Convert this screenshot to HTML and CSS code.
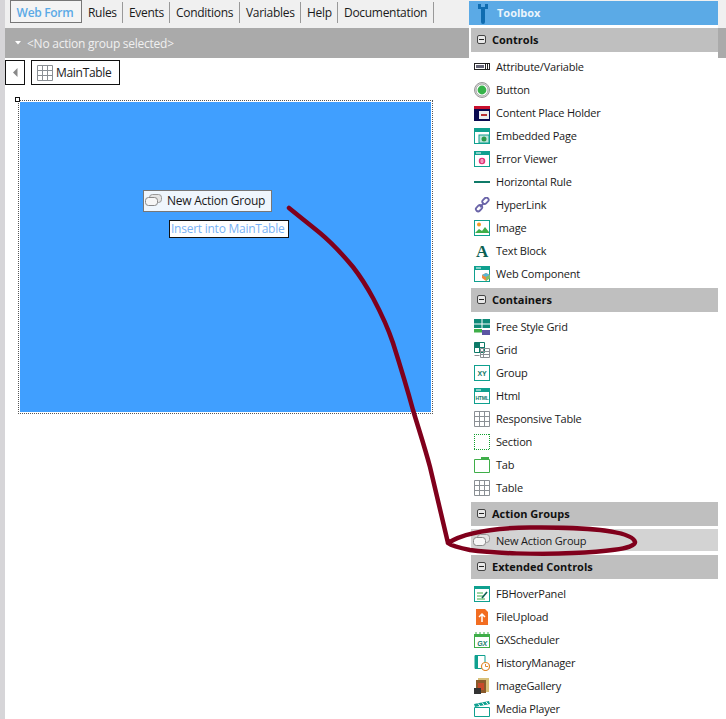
FILE: index.html
```html
<!DOCTYPE html>
<html lang="en">
<head>
<meta charset="utf-8">
<title>Web Form</title>
<link rel="stylesheet" href="styles.css">
</head>
<body>
<div class="app">
  <main class="editor">
    <nav class="tabs">
      <span class="tab active">Web Form</span>
      <span class="tab t-rules">Rules</span>
      <span class="tab t-events">Events</span>
      <span class="tab t-cond">Conditions</span>
      <span class="tab t-vars">Variables</span>
      <span class="tab t-help">Help</span>
      <span class="tab t-doc">Documentation</span>
    </nav>
    <div class="groupbar"><svg class="caret" width="6" height="4" viewBox="0 0 6 4"><path d="M0 0h6L3 3.5z" fill="#fff"/></svg><span>&lt;No action group selected&gt;</span></div>
    <div class="crumbs">
      <button class="back"><svg width="5" height="9" viewBox="0 0 5 9"><path d="M4.5 0v9L0 4.5z" fill="#888"/></svg></button>
      <button class="crumb"><svg width="16" height="16" viewBox="0 0 16 16"><path d="M.5.5h15v15H.5zM5.5.5v15M10.5.5v15M.5 5.5h15M.5 10.5h15" fill="none" stroke="#8a8f94"/></svg><span>MainTable</span></button>
    </div>
    <div class="canvas-wrap">
      <div class="canvas"></div>
      <i class="handle"></i>
      <div class="drag"><svg width="17" height="12" viewBox="0 0 17 12"><rect x="4.5" y=".5" width="12" height="8" rx="3" fill="#e4e4e4" stroke="#999"/><rect x=".5" y="3.5" width="12" height="8" rx="3" fill="#f6f6f6" stroke="#888"/></svg><span>New Action Group</span></div>
      <div class="hint">Insert into MainTable</div>
    </div>
  </main>

  <aside class="toolbox">
    <header class="tb-title"><svg width="10" height="21" viewBox="0 0 10 21"><path d="M0 1h3v3h4V1h3v5H7v13a2 2 0 0 1-4 0V6H0z" fill="#0f6cb0"/></svg><span>Toolbox</span></header>

    <h2 class="sec"><i class="minus"></i>Controls</h2>
    <ul class="list">
      <li><svg viewBox="0 0 16 16"><rect x=".5" y="4.5" width="15" height="6" fill="#fff" stroke="#222"/><rect x="2" y="6" width="8" height="3" fill="#667"/><path d="M11.5 5v5M13.5 5v5" stroke="#222"/></svg>Attribute/Variable</li>
      <li><svg viewBox="0 0 16 16"><circle cx="8" cy="8" r="7.5" fill="#ddd" stroke="#999"/><circle cx="8" cy="8" r="6" fill="#fff" stroke="#aaa"/><circle cx="8" cy="8" r="4.4" fill="#36b34a"/></svg>Button</li>
      <li><svg viewBox="0 0 16 16"><rect width="16" height="15" y="1" fill="#0a0a50"/><rect x="0" y="1" width="16" height="3" fill="#c8102e"/><rect x="5" y="6" width="10" height="8" fill="#eee"/><rect x="7" y="9" width="6" height="2" fill="#b33"/></svg>Content Place Holder</li>
      <li><svg viewBox="0 0 16 16"><rect x=".5" y=".5" width="15" height="15" fill="#fff" stroke="#0fa08f"/><rect width="16" height="4" fill="#0fa08f"/><rect x="5" y="7" width="10" height="8" fill="#bde5dc" stroke="#0fa08f"/><circle cx="10" cy="11" r="2.5" fill="#2a9a4a"/></svg>Embedded Page</li>
      <li><svg viewBox="0 0 16 16"><rect x=".5" y=".5" width="15" height="15" fill="#fff" stroke="#0fa08f"/><rect width="16" height="4" fill="#0fa08f"/><path d="M2 2h5" stroke="#fff"/><circle cx="8" cy="10" r="2.5" fill="none" stroke="#e2337a" stroke-width="1.5"/><path d="M5.5 10h5" stroke="#e2337a"/></svg>Error Viewer</li>
      <li><svg viewBox="0 0 16 16"><rect y="7" width="16" height="2" fill="#0f7a68"/></svg>Horizontal Rule</li>
      <li><svg viewBox="0 0 16 16"><g fill="none" stroke="#6a64a8" stroke-width="1.8"><rect x="8" y="1.5" width="7" height="4.5" rx="2.2" transform="rotate(-45 11.5 3.8)"/><rect x="1.5" y="9" width="7" height="4.5" rx="2.2" transform="rotate(-45 5 11.2)"/><path d="M6 10l4-4"/></g></svg>HyperLink</li>
      <li><svg viewBox="0 0 16 16"><rect x=".5" y=".5" width="15" height="15" fill="#fff" stroke="#0fa08f"/><circle cx="5" cy="4.5" r="2" fill="#f59a23"/><path d="M1 13l4-4 3 2 3-4 4 5v1H1z" fill="#3fae49"/></svg>Image</li>
      <li><svg class="ico-over" viewBox="0 0 16 16"><text x="8" y="14" class="ico-a">A</text></svg>Text Block</li>
      <li><svg viewBox="0 0 16 16"><rect x=".5" y=".5" width="15" height="15" fill="#fff" stroke="#0fa08f"/><rect width="16" height="4" fill="#0fa08f"/><path d="M2 2h5" stroke="#fff"/><path d="M12 7l4 2v3l-4 3-4-3V9z" fill="#f08a3c"/><path d="M12 7l4 2-4 2-4-2z" fill="#58b6d8"/><path d="M12 11l4-2v3l-4 3z" fill="#7cc06a"/></svg>Web Component</li>
    </ul>

    <h2 class="sec"><i class="minus"></i>Containers</h2>
    <ul class="list">
      <li><svg viewBox="0 0 16 16"><rect width="16" height="4.5" y="0" fill="#0f8a78"/><rect y="5.5" width="16" height="3.5" fill="#0f8a78"/><rect y="10" width="8" height="3.5" fill="#3fae49"/><rect x="8" y="11" width="8" height="5" fill="#5b55a3"/><path d="M8 0v9" stroke="#fff"/></svg>Free Style Grid</li>
      <li><svg viewBox="0 0 16 16"><path d="M.5.5h10v10H.5zM.5 5.5h10M5.5.5v10" fill="none" stroke="#0f7a68"/><rect x=".5" y=".5" width="5" height="5" fill="#0f7a68"/><path d="M.5 13.5h5M6.5 6.5h9v9h-9zM6.5 9.5h9M6.5 12.5h9M9.5 6.5v9" fill="none" stroke="#8a8f94"/></svg>Grid</li>
      <li><svg viewBox="0 0 16 16"><rect x=".5" y=".5" width="15" height="15" fill="#fff" stroke="#0fa08f"/><text x="8" y="10.5" class="ico-t">XY</text></svg>Group</li>
      <li><svg viewBox="0 0 16 16"><rect x=".5" y=".5" width="15" height="15" fill="#fff" stroke="#0fa08f"/><rect width="16" height="4" fill="#0fa08f"/><path d="M2 2h5" stroke="#fff"/><text x="8" y="12" class="ico-h">HTML</text></svg>Html</li>
      <li><svg viewBox="0 0 16 16"><path d="M.5.5h15v15H.5zM5.5.5v15M10.5.5v15M.5 5.5h15M.5 10.5h15" fill="none" stroke="#8a8f94"/></svg>Responsive Table</li>
      <li><svg viewBox="0 0 16 16" shape-rendering="crispEdges"><path d="M.5 0v16M15.5 0v16M0 .5h16M0 15.5h16" fill="none" stroke="#12a02e" stroke-dasharray="1 1"/></svg>Section</li>
      <li><svg viewBox="0 0 16 16"><path d="M.5 2.5h15v13H.5z" fill="#fff" stroke="#3fae49"/><rect x="7" y="0" width="8" height="3" fill="#3fae49"/></svg>Tab</li>
      <li><svg viewBox="0 0 16 16"><path d="M.5.5h15v15H.5zM5.5.5v15M10.5.5v15M.5 5.5h15M.5 10.5h15" fill="none" stroke="#8a8f94"/></svg>Table</li>
    </ul>

    <h2 class="sec"><i class="minus"></i>Action Groups</h2>
    <div class="picked"><svg width="17" height="12" viewBox="0 0 17 12"><rect x="4.5" y=".5" width="12" height="8" rx="3" fill="#e4e4e4" stroke="#999"/><rect x=".5" y="3.5" width="12" height="8" rx="3" fill="#f6f6f6" stroke="#888"/></svg>New Action Group</div>

    <h2 class="sec sec-ext"><i class="minus"></i>Extended Controls</h2>
    <ul class="list">
      <li><svg viewBox="0 0 16 16"><rect x=".5" y=".5" width="15" height="15" fill="#fff" stroke="#0fa08f"/><rect width="16" height="3" fill="#0fa08f"/><path d="M3 7h6M3 10h6M3 13h8" stroke="#3fae49"/><path d="M8 12l5-6" stroke="#0c5f52" stroke-width="1.6"/></svg>FBHoverPanel</li>
      <li><svg viewBox="0 0 16 16"><path d="M2 0h9l3 3v13H2z" fill="#f26d21"/><path d="M8 13V5M5 8l3-3 3 3" fill="none" stroke="#fff" stroke-width="1.5"/></svg>FileUpload</li>
      <li><svg viewBox="0 0 16 16"><rect x=".5" y="2.5" width="15" height="13" fill="#fff" stroke="#3fae49"/><rect y="2" width="16" height="3" fill="#3fae49"/><path d="M2 0v2M6 0v2M10 0v2M14 0v2" stroke="#3fae49"/><text x="8" y="13.5" class="ico-g">GX</text></svg>GXScheduler</li>
      <li><svg viewBox="0 0 16 16"><path d="M1 .5h10v13H1z" fill="#fff" stroke="#0fa08f"/><rect x="1" y="0" width="3" height="14" fill="#0fa08f"/><circle cx="11.5" cy="11.5" r="4" fill="#fff" stroke="#e08a2c" stroke-width="1.2"/><path d="M11.5 9v2.5H14" fill="none" stroke="#e08a2c"/></svg>HistoryManager</li>
      <li><svg viewBox="0 0 16 16"><rect x="4" y="0" width="11" height="14" fill="#d8c07a"/><rect x="2" y="2" width="10" height="13" fill="#8a5a2b"/><rect x="4" y="5" width="6" height="7" fill="#c84a2a"/><rect y="10" width="7" height="6" fill="#333"/></svg>ImageGallery</li>
      <li><svg viewBox="0 0 16 16"><path d="M.5 6.5h15v9H.5z" fill="#fff" stroke="#0fa08f"/><path d="M0 3l15-3 1 3-15 3z" fill="#0fa08f"/><path d="M4 2.5l2 2.5M8 1.5l2 2.5M12 .8l2 2.5" stroke="#fff"/></svg>Media Player</li>
    </ul>
  </aside>

  <svg class="annot" width="726" height="719" viewBox="0 0 726 719">
    <path d="M289 208C300 217 309 224 320 233C332 243 343 255 353 267C360 276 367 287 373 298C381 313 388 328 393 343C400 365 407 388 413 410C419 430 425 448 430 467C436 492 442 518 448 543C462 534 490 528 530 527.5C580 527 632 530 635 542C636 549 600 552 573 553C540 555 490 553 470 550C460 548 452 546 448 543" fill="none" stroke="#80001c" stroke-width="4.5" stroke-linecap="round" stroke-linejoin="round"/>
  </svg>
</div>
</body>
</html>
```
FILE: styles.css
```css
* { box-sizing: border-box; }
html, body { margin: 0; padding: 0; background: #fff; }
body { font-family: "Open Sans", "Noto Sans", sans-serif; font-size: 12px; color: #1a1a1a; }
.app { position: relative; width: 726px; height: 719px; overflow: hidden; background: #fff; }
.editor { height: 719px; border-left: 5px solid #d6d5d8; display: flex; flex-direction: column; }
.tabs { height: 28px; background: #f0f0f0; display: flex; align-items: flex-start; padding-left: 5px; flex: none; }
.tab { height: 21px; line-height: 21px; margin-top: 2px; padding: 0 6px; border-right: 1px solid #999; white-space: nowrap; letter-spacing: -.3px; }
.tab.active { height: 23px; margin-top: 0; line-height: 23px; padding: 0 6px 0 4px; width: 72px; border: 1px solid #777; color: #5baae6; font-weight: 600; text-align: center; background: #f4f4f4; }
.t-rules { width: 41px; }
.t-events { width: 47px; }
.t-cond { width: 70px; }
.t-vars { width: 61px; }
.t-help { width: 37px; }
.t-doc { width: 96px; }
.groupbar { height: 30px; background: #aaa; color: #f0f0f0; display: flex; align-items: center; padding-left: 10px; gap: 6px; flex: none; letter-spacing: -.25px; }
.crumbs { display: flex; gap: 6px; padding-top: 2px; height: 27px; flex: none; }
.back, .crumb { height: 25px; background: #fff; border: 1px solid #111; padding: 0; display: flex; align-items: center; font: inherit; color: inherit; }
.back { width: 20px; justify-content: center; }
.crumb { width: 89px; padding-left: 5px; gap: 3px; letter-spacing: -.3px; }
.canvas-wrap { position: relative; flex: none; padding: 15px 0 0 13px; }
.canvas { width: 415px; height: 314px; border: 1px dotted #555; background: #409fff; background-clip: content-box; padding: 1px; }
.handle { position: absolute; left: 10px; top: 12px; width: 5px; height: 5px; border: 1px solid #111; background: #fff; }
.drag { position: absolute; left: 138px; top: 105px; width: 129px; height: 22px; background: #eff6fd; border: 1px solid #777; display: flex; align-items: center; padding: 0 0 2px 1px; gap: 5px; white-space: nowrap; letter-spacing: -.25px; }
.hint { position: absolute; left: 164px; top: 135px; width: 120px; height: 18px; background: #fff; border: 1px solid #111; color: #78b2f6; line-height: 15px; padding-left: 1px; white-space: nowrap; letter-spacing: -.25px; }
.toolbox { position: absolute; left: 469px; top: 1px; width: 249px; height: 718px; background: #fff; font-size: 11px; letter-spacing: -.2px; }
.tb-title { height: 24px; background: #5baae6; color: #eaf4fc; font-weight: 700; display: flex; align-items: center; gap: 9px; padding: 0 0 2px 9px; margin-bottom: 3px; letter-spacing: 0; }
.tb-title svg { margin-bottom: -2px; }
.sec { margin: 0 0 0 2px; height: 24px; background: #bfbfbf; font-size: 11px; font-weight: 700; letter-spacing: 0; color: #111; display: flex; align-items: center; gap: 6px; padding: 0 0 2px 6px; }
.minus { position: relative; width: 9px; height: 9px; border: 1px solid #444; border-radius: 2px; background: #e8e8e8; }
.minus::after { content: ""; position: absolute; left: 1px; right: 1px; top: 3px; height: 1px; background: #222; }
.list { list-style: none; margin: 0; padding: 3px 0 3px 5px; }
.list li { height: 23px; display: flex; align-items: center; gap: 6px; white-space: nowrap; }
.list svg { width: 16px; height: 16px; flex: none; }
.list svg.ico-over { overflow: visible; }
.picked { margin: 3px 0 4px 2px; height: 22px; background: #d3d3d3; display: flex; align-items: center; gap: 6px; padding-left: 2px; white-space: nowrap; }
.ico-t { font: 700 7px "Liberation Sans", sans-serif; fill: #0f7a68; text-anchor: middle; }
.ico-h { font: 700 5px "Liberation Sans", sans-serif; fill: #0f7a68; text-anchor: middle; }
.ico-g { font: italic 700 7px "Liberation Sans", sans-serif; fill: #0f7a68; text-anchor: middle; }
.ico-a { font: 700 17px "Liberation Serif", serif; fill: #0c5f52; text-anchor: middle; }
.annot { position: absolute; left: 0; top: 0; pointer-events: none; }
```
